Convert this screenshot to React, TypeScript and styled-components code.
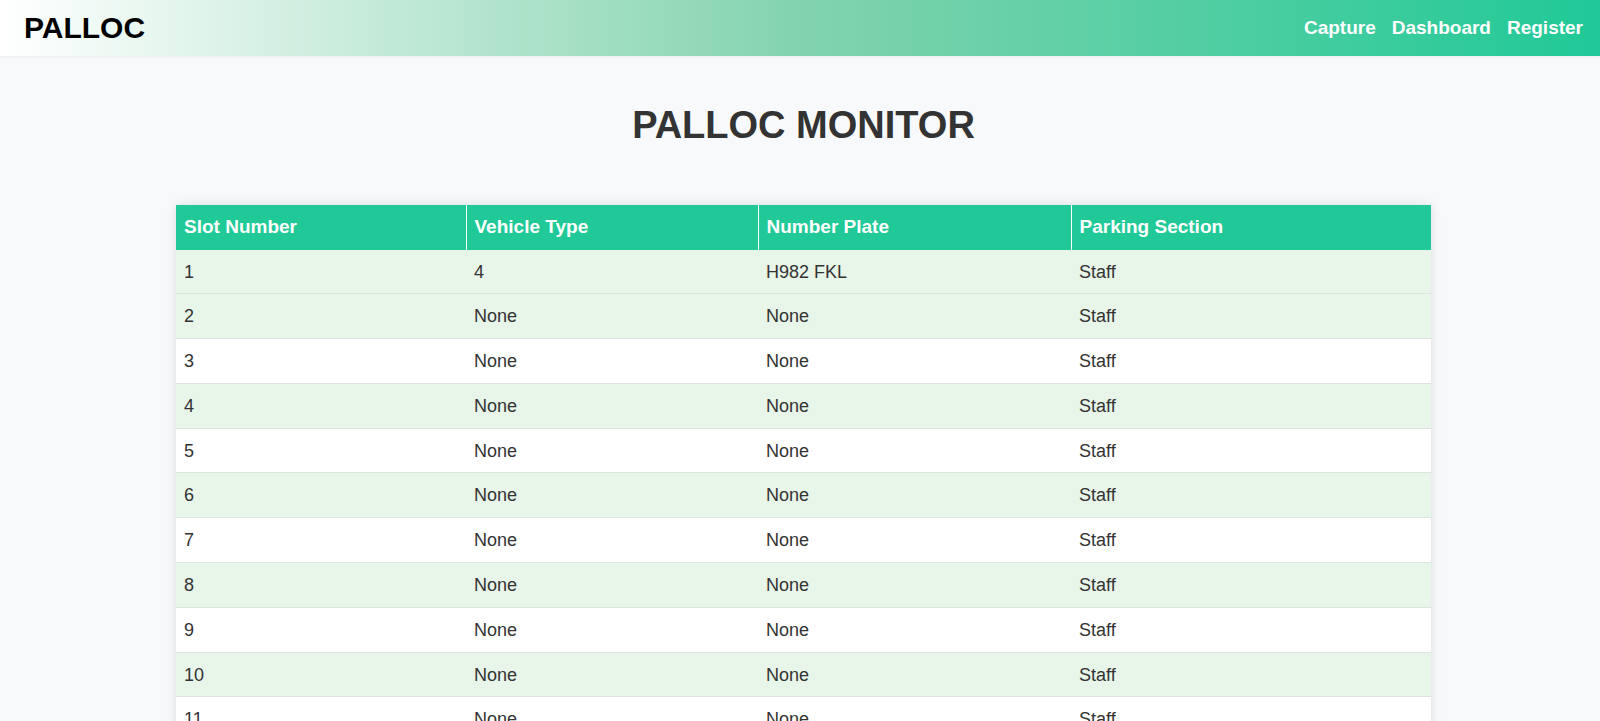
import React from "react";
import styled, { createGlobalStyle } from "styled-components";

const GlobalStyle = createGlobalStyle`
    html, body {
        margin: 0;
        padding: 0;
        background: #f8f9fa;
        font-family: "Liberation Sans", Arial, sans-serif;
        color: #333;
    }
`;

const Navbar = styled.nav`
    height: 56px;
    display: flex;
    align-items: center;
    justify-content: space-between;
    padding: 0 17px 0 24px;
    background: linear-gradient(to right, #ffffff 0%, #82d3ae 50%, #20c997 100%);
    box-shadow: 0 1px 3px rgba(0, 0, 0, 0.06);
`;

const Brand = styled.div`
    font-size: 30px;
    font-weight: 700;
    color: #000;
`;

const NavLinks = styled.div`
    display: flex;
    gap: 16px;
`;

const NavLink = styled.a`
    color: #fff;
    font-size: 19px;
    font-weight: 700;
    text-decoration: none;
`;

const Main = styled.main`
    padding: 0 169px 40px 176px;
`;

const Title = styled.h1`
    margin: 0;
    padding: 48px 0 59px;
    text-align: center;
    font-size: 38px;
    line-height: 42px;
    font-weight: 700;
    color: #333;
`;

const Table = styled.table`
    width: 100%;
    border-collapse: collapse;
    background: #fff;
    box-shadow: 0 0 10px rgba(0, 0, 0, 0.12);
`;

const HeadCell = styled.th`
    background: #20c997;
    color: #fff;
    text-align: left;
    font-size: 19px;
    font-weight: 700;
    line-height: 20.5px;
    padding: 12px 8px;
    border-left: 1px solid #fff;

    &:first-child {
        border-left: none;
    }
`;

const Row = styled.tr<{ $shaded: boolean }>`
    background: ${(p) => (p.$shaded ? "#e8f5e9" : "#fff")};
    border-bottom: 1px solid #dde3de;
`;

const Cell = styled.td`
    font-size: 18px;
    line-height: 19.8px;
    padding: 13px 8px 11px;
    color: #333;
`;

const headers = ["Slot Number", "Vehicle Type", "Number Plate", "Parking Section"];

const slots = Array.from({ length: 12 }, (_, i) => ({
    slot: i + 1,
    type: i === 0 ? "4" : "None",
    plate: i === 0 ? "H982 FKL" : "None",
    section: "Staff",
}));

export default function App() {
    return (
        <>
            <GlobalStyle />
            <Navbar>
                <Brand>PALLOC</Brand>
                <NavLinks>
                    <NavLink href="#">Capture</NavLink>
                    <NavLink href="#">Dashboard</NavLink>
                    <NavLink href="#">Register</NavLink>
                </NavLinks>
            </Navbar>
            <Main>
                <Title>PALLOC MONITOR</Title>
                <Table>
                    <colgroup>
                        <col style={{ width: 290 }} />
                        <col style={{ width: 292 }} />
                        <col style={{ width: 313 }} />
                        <col />
                    </colgroup>
                    <thead>
                        <tr>
                            {headers.map((h) => (
                                <HeadCell key={h}>{h}</HeadCell>
                            ))}
                        </tr>
                    </thead>
                    <tbody>
                        {slots.map((s) => (
                            <Row key={s.slot} $shaded={s.slot === 1 || s.slot % 2 === 0}>
                                <Cell>{s.slot}</Cell>
                                <Cell>{s.type}</Cell>
                                <Cell>{s.plate}</Cell>
                                <Cell>{s.section}</Cell>
                            </Row>
                        ))}
                    </tbody>
                </Table>
            </Main>
        </>
    );
}
